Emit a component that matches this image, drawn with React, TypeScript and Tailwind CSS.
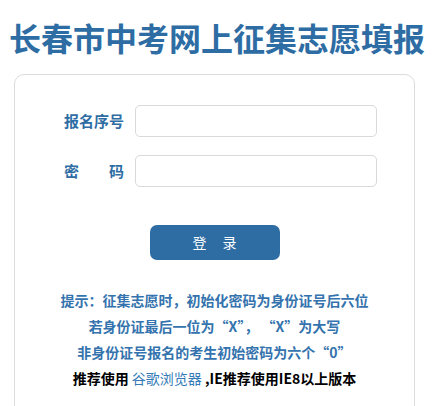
const hints = [
  "提示：征集志愿时，初始化密码为身份证号后六位",
  "若身份证最后一位为“X”， “X”为大写",
  "非身份证号报名的考生初始密码为六个“0”",
];

export default function App() {
  return (
    <div className="h-[406px] w-[434px] overflow-hidden bg-white font-['Noto_Sans_CJK_SC','Noto_Sans',sans-serif]">
      <h1 className="whitespace-nowrap pt-[21px] text-center text-[32px] font-bold leading-[32px] text-[#2e6da4]">
        长春市中考网上征集志愿填报
      </h1>
      <div className="ml-[14px] mt-[21px] h-[360px] w-[401px] rounded-[10px] border border-[#dcdcdc] pt-[30px]">
        <div className="flex flex-col gap-[18px] pl-[49px]">
          <div className="flex items-center gap-[11px]">
            <label className="w-[60px] text-[15px] font-bold text-[#2e6da4]">报名序号</label>
            <input className="h-[32px] w-[242px] rounded-[5px] border border-[#d9d9d9] px-2 outline-none" />
          </div>
          <div className="flex items-center gap-[11px]">
            <label className="flex w-[60px] justify-between text-[15px] font-bold text-[#2e6da4]">
              <span>密</span>
              <span>码</span>
            </label>
            <input type="password" className="h-[32px] w-[242px] rounded-[5px] border border-[#d9d9d9] px-2 outline-none" />
          </div>
        </div>
        <div className="mt-[38px] flex justify-center">
          <button className="flex h-[35px] w-[130px] items-center justify-center gap-[16px] rounded-[7px] bg-[#2e6da4] text-[14px] text-white">
            <span>登</span>
            <span>录</span>
          </button>
        </div>
        <div className="mt-[27px] text-center text-[14px] font-bold leading-[26px]">
          {hints.map((h) => (
            <p key={h} className="text-[#3473ad]">
              {h}
            </p>
          ))}
          <p className="text-black">
            推荐使用 <span className="font-normal text-[#337ab7]">谷歌浏览器</span> ,IE推荐使用IE8以上版本
          </p>
        </div>
      </div>
    </div>
  );
}
